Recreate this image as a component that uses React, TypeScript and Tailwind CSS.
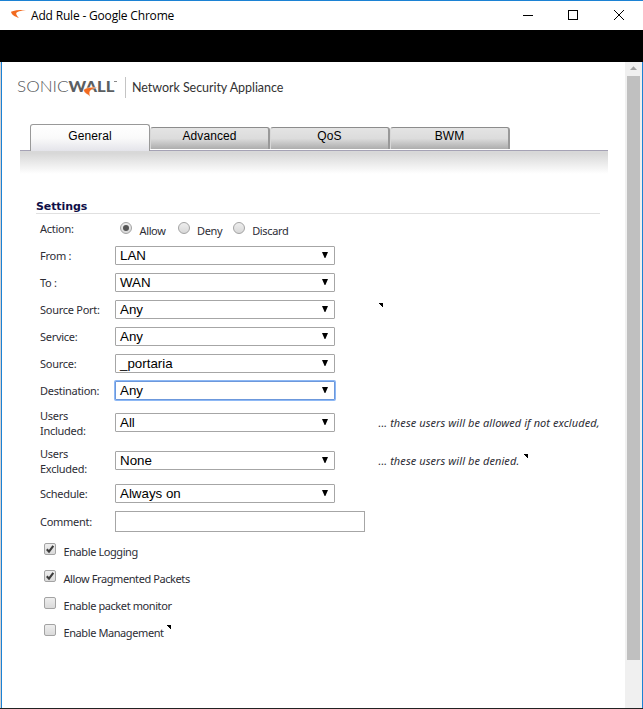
import type { ReactNode } from "react";

function TitleBar() {
  return (
    <header className="flex h-[30px] shrink-0 items-start border-t border-[#1c82d4] bg-white">
      <svg className="ml-[11px] mt-[9px] h-[8px] w-[15px]" viewBox="0 0 15 8">
        <path d="M0 1.8C3 0.3 9 0 15 0.1C10 0.8 5.4 1.8 5.2 3.6C5 5 6.8 6.8 8 8C4 6.8 0.4 4.6 0 1.8Z" fill="#f26a1f" />
      </svg>
      <h1 className="ml-[5px] mt-[5px] grow whitespace-nowrap font-['Open_Sans',sans-serif] text-[12px] leading-[20px] tracking-[-0.18px] text-black">
        Add Rule - Google Chrome
      </h1>
      <svg className="mr-[18px] mt-[7px] h-[16px] w-[104px]" viewBox="0 0 104 16" fill="none" stroke="#000" strokeWidth="1">
        <path d="M2 7.5H12M47.5 2.5H56.5V11.5H47.5Z" shapeRendering="crispEdges" />
        <path d="M93 2L103 12M103 2L93 12" />
      </svg>
    </header>
  );
}

function Brand() {
  return (
    <div className="flex h-[62px] items-start pl-[15px] pt-[15px]">
      <svg className="h-[24px] w-[104px] shrink-0 overflow-visible" viewBox="0 0 104 24">
        <text x="0" y="15" fontFamily="Lato" fontSize="15.5" fontWeight="300" fill="#55575a" textLength="51.5" lengthAdjust="spacingAndGlyphs">
          SONIC
        </text>
        <text x="51.5" y="15" fontFamily="Lato" fontSize="15.5" fontWeight="900" fill="#5b5e61" textLength="46" lengthAdjust="spacingAndGlyphs">
          WALL
        </text>
        <path d="M66.5 13C69 10.6 73.5 9.8 80.5 10.6C76.4 11.6 73.8 12.6 73 14.2C72.2 15.8 72.8 17.2 73 19.6C71.2 17 68 17.4 66.5 13Z" fill="#f26a1f" stroke="#fff" strokeWidth="0.4" />
        <path d="M97 4.5h3" stroke="#888" strokeWidth="1" />
      </svg>
      <div className="ml-[4px] h-[21px] border-l border-[#c4c4c4] pl-[6px] font-[Lato,sans-serif] text-[12.5px] leading-[21px] tracking-[-0.05px] text-[#333]">
        <span className="whitespace-nowrap">Network Security Appliance</span>
      </div>
    </div>
  );
}

function Tabs() {
  return (
    <div className="ml-[18px] w-[588px]">
      <nav className="flex h-[26px] items-end pl-[10px] font-['Liberation_Sans',Arial,sans-serif] text-[12px] leading-[14px] tracking-[0.1px] text-black">
        <div className="relative z-10 -mb-px h-[27px] w-[120px] rounded-t-[3px] border border-b-0 border-[#999] bg-linear-to-b from-white via-[#fafafa] to-[#e4e4ea] pt-[4px] text-center">General</div>
        {["Advanced", "QoS", "BWM"].map((name) => (
          <div key={name} className="mb-px h-[22px] w-[120px] rounded-t-[3px] border border-b-0 border-l-[#d8d8d8] border-r-[2px] border-r-[#999] border-t-[#8c8c8c] bg-linear-to-b from-[#e4e4e4] via-[#dcdcdc] to-[#adadad] pt-px text-center">
            {name}
          </div>
        ))}
      </nav>
      <div className="h-[25px] border-t border-[#a5a2b5] bg-linear-to-b from-[#d8d8d8] from-10% to-white to-95%" />
    </div>
  );
}

function Row({
  label,
  height = "h-[27px]",
  labelPad = "pb-px",
  children,
}: {
  label: ReactNode;
  height?: string;
  labelPad?: string;
  children: ReactNode;
}) {
  return (
    <div className={`flex items-center ${height}`}>
      <div className={`w-[75px] shrink-0 whitespace-nowrap leading-[15px] ${labelPad}`}>{label}</div>
      {children}
    </div>
  );
}

function Select({ value, focused = false }: { value: string; focused?: boolean }) {
  return (
    <div
      className={`flex h-[19px] w-[220px] shrink-0 items-center justify-between rounded-[1px] border bg-white pl-[4px] pr-[5px] font-['Liberation_Sans',Arial,sans-serif] text-[13.33px] leading-[17px] tracking-normal text-black ${
        focused ? "border-[#6c98dc] shadow-[0_0_0_1px_#8db8f5]" : "border-[#a6a6a6]"
      }`}
    >
      <span>{value}</span>
      <svg className="h-[7px] w-[8px]" viewBox="0 0 8 7">
        <path d="M1 0H7L4.4 6H3.6Z" fill="#000" />
      </svg>
    </div>
  );
}

function Radio({ label, checked = false, gap }: { label: string; checked?: boolean; gap: string }) {
  return (
    <div className={`flex items-center ${gap}`}>
      <span className="flex size-[12px] shrink-0 items-center justify-center rounded-full border border-[#a3a3a3] bg-linear-to-b from-[#eee] to-[#d8d8d8]">
        {checked && <span className="size-[6px] rounded-full bg-[#555]" />}
      </span>
      <span className="ml-[7.5px] whitespace-nowrap pt-[5px] leading-[15px] tracking-[-0.36px]">{label}</span>
    </div>
  );
}

function Corner({ className }: { className: string }) {
  return (
    <svg className={`h-[4px] w-[4px] shrink-0 ${className}`} viewBox="0 0 4 4" shapeRendering="crispEdges">
      <path d="M0 0H4V4H3V3H2V2H1V1H0Z" fill="#000" />
    </svg>
  );
}

function Check({ label, checked = false, marked = false }: { label: string; checked?: boolean; marked?: boolean }) {
  return (
    <div className="flex h-[27px] items-center pl-[4px]">
      <span className="size-[12px] shrink-0 rounded-[2px] border border-[#a3a3a3] bg-linear-to-b from-[#eee] to-[#dadada]">
        {checked && (
          <svg className="size-[10px]" viewBox="0 0 10 10">
            <path d="M1.8 5.2L4 7.6L8.3 1.8" fill="none" stroke="#3c3c3c" strokeWidth="2.1" />
          </svg>
        )}
      </span>
      <span className="ml-[7.5px] whitespace-nowrap pt-[6px] leading-[15px] tracking-[-0.41px]">{label}</span>
      {marked && <Corner className="mb-[5px] ml-[3px]" />}
    </div>
  );
}

function Hint({ children }: { children: ReactNode }) {
  return <em className="ml-[43.5px] whitespace-nowrap pb-px leading-[15px] tracking-[0.08px]">{children}</em>;
}

function SettingsForm() {
  return (
    <section className="ml-[34px] mt-[24px] w-[564px]">
      <h2 className="flex h-[15px] items-start border-b border-[#e0e0e0] font-['DejaVu_Sans',Verdana,sans-serif] text-[11px] font-bold leading-[16px] tracking-[-0.1px] text-[#0f0f48]">
        Settings
      </h2>
      <div className="pl-[4px] font-['Noto_Sans',Tahoma,sans-serif] text-[11px] tracking-[-0.27px] text-[#2d2d35]">
        <Row height="h-[28px]" labelPad="pt-px" label="Action:">
          <Radio label="Allow" checked gap="ml-[5px]" />
          <Radio label="Deny" gap="ml-[12px]" />
          <Radio label="Discard" gap="ml-[10.5px]" />
        </Row>
        <Row label="From :"><Select value="LAN" /></Row>
        <Row label="To :"><Select value="WAN" /></Row>
        <Row label="Source Port:">
          <Select value="Any" />
          <Corner className="mb-[10px] ml-[44px]" />
        </Row>
        <Row label="Service:"><Select value="Any" /></Row>
        <Row label="Source:"><Select value="_portaria" /></Row>
        <Row label="Destination:"><Select value="Any" focused /></Row>
        <Row height="h-[37px]" labelPad="pt-px" label={<>Users<br />Included:</>}>
          <Select value="All" />
          <Hint>... these users will be allowed if not excluded,</Hint>
        </Row>
        <Row height="h-[39px]" labelPad="pt-px" label={<>Users<br />Excluded:</>}>
          <Select value="None" />
          <Hint>... these users will be denied.</Hint>
          <Corner className="mb-[9px] ml-[4.5px]" />
        </Row>
        <Row label="Schedule:"><Select value="Always on" /></Row>
        <Row height="h-[29px]" label="Comment:">
          <div className="h-[21px] w-[250px] border border-[#a6a6a6] bg-white" />
        </Row>
        <div className="-mt-px">
          <Check label="Enable Logging" checked />
          <Check label="Allow Fragmented Packets" checked />
          <Check label="Enable packet monitor" />
          <Check label="Enable Management" marked />
        </div>
      </div>
    </section>
  );
}

function Scrollbar() {
  return (
    <aside className="flex w-[17px] shrink-0 flex-col items-center bg-[#f0f0f0]">
      <svg className="h-[14px] w-[9px] shrink-0" viewBox="0 0 9 14">
        <path d="M1 8L4.5 4.3L8 8Z" fill="#a0a0a0" />
      </svg>
      <div className="h-[584px] w-[13px] bg-[#c0c0c0]" />
    </aside>
  );
}

export default function App() {
  return (
    <div className="flex h-[709px] w-[643px] flex-col overflow-hidden border-b border-[#222] bg-white">
      <TitleBar />
      <div className="h-[32px] shrink-0 bg-black" />
      <div className="flex grow border-l border-[#d5d0d0]">
        <div className="flex grow border-x border-[#1c82d4]">
          <main className="w-[623px] shrink-0">
            <Brand />
            <Tabs />
            <SettingsForm />
          </main>
          <Scrollbar />
        </div>
      </div>
    </div>
  );
}
